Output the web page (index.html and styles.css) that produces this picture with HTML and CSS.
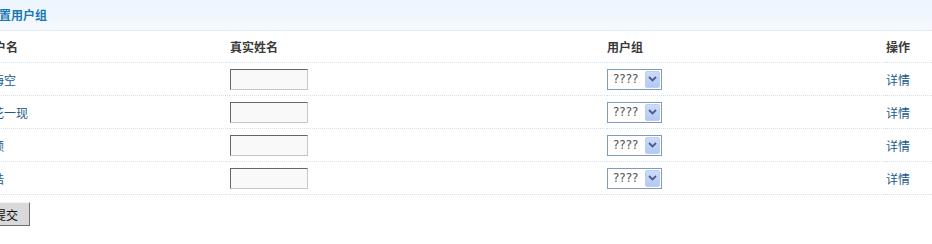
FILE: index.html
```
<!DOCTYPE html>
<html lang="zh-CN">
  <head>
    <meta charset="UTF-8">
    <meta name="viewport" content="width=device-width, initial-scale=1.0">
    <title>设置用户组</title>
    <link rel="stylesheet" href="styles.css">
  </head>
  <body>
    <div id="contingut">
      <div class="titol">设置用户组</div>

      <table class="llista">
        <tr class="cap">
          <th class="c1">用户名</th>
          <th class="c2">真实姓名</th>
          <th class="c3">用户组</th>
          <th class="c4">操作</th>
        </tr>
        <tr>
          <td><a href="#">碧海空</a></td>
          <td><input class="nom" type="text"></td>
          <td>
            <div class="grup"><span class="valor">????</span><span class="fletxa"><svg width="9" height="6" viewBox="0 0 9 6"><path d="M1 1 L4.5 4.5 L8 1" fill="none" stroke="#4a5f88" stroke-width="1.8"/></svg></span></div>
          </td>
          <td><a href="#">详情</a></td>
        </tr>
        <tr>
          <td><a href="#">昙花一现</a></td>
          <td><input class="nom" type="text"></td>
          <td>
            <div class="grup"><span class="valor">????</span><span class="fletxa"><svg width="9" height="6" viewBox="0 0 9 6"><path d="M1 1 L4.5 4.5 L8 1" fill="none" stroke="#4a5f88" stroke-width="1.8"/></svg></span></div>
          </td>
          <td><a href="#">详情</a></td>
        </tr>
        <tr>
          <td><a href="#">红颜</a></td>
          <td><input class="nom" type="text"></td>
          <td>
            <div class="grup"><span class="valor">????</span><span class="fletxa"><svg width="9" height="6" viewBox="0 0 9 6"><path d="M1 1 L4.5 4.5 L8 1" fill="none" stroke="#4a5f88" stroke-width="1.8"/></svg></span></div>
          </td>
          <td><a href="#">详情</a></td>
        </tr>
        <tr>
          <td><a href="#">明皓</a></td>
          <td><input class="nom" type="text"></td>
          <td>
            <div class="grup"><span class="valor">????</span><span class="fletxa"><svg width="9" height="6" viewBox="0 0 9 6"><path d="M1 1 L4.5 4.5 L8 1" fill="none" stroke="#4a5f88" stroke-width="1.8"/></svg></span></div>
          </td>
          <td><a href="#">详情</a></td>
        </tr>
      </table>

      <button class="envia" type="button">提交</button>
    </div>
  </body>
</html>
```

FILE: styles.css
```
body {
  margin: 0;
  background: white;
  font-family: "Noto Sans CJK SC", "DejaVu Sans", sans-serif;
  font-size: 12px;
  color: #333;
  overflow: hidden;
}

/* la pagina comenca una mica fora de la finestra */
#contingut {
  width: 960px;
  margin-left: -20px;
}

.titol {
  height: 30px;
  line-height: 30px;
  padding-left: 7px;
  background: linear-gradient(#ecf4fd, #f5f9fe);
  border-bottom: 1px dotted #d5e3ef;
  color: #1a78b4;
  font-weight: bold;
}

/* --------------- Taula ----------------- */

.llista {
  width: 960px;
  border-collapse: collapse;
  table-layout: fixed;
}

.llista th, .llista td {
  padding: 0;
  text-align: left;
  border-bottom: 1px dotted #d3e2ec;
}

.llista th {
  height: 31px;
  font-weight: bold;
  color: #3a3a3a;
}

.llista td {
  height: 32px;
}

/* la primera columna porta 2px de padding: 248 + 2 = 250 */
.llista .c1 { width: 248px; padding-left: 2px; }
.llista .c2 { width: 377px; }
.llista .c3 { width: 279px; }

.llista a {
  color: #205a8a;
  text-decoration: none;
}

.nom {
  display: block;
  box-sizing: border-box;
  width: 78px;
  height: 21px;
  margin: 0;
  background: #f9f9f9;
  border: 1px solid #c6c6c6;
  border-top-color: #666;
  border-left-color: #666;
}

/* --------------- Desplegable ----------------- */

.grup {
  box-sizing: border-box;
  width: 55px;
  height: 21px;
  border: 1px solid #7f9db9;
  display: flex;
  align-items: center;
  justify-content: space-between;
  padding: 0 1px 0 5px;
  background: white;
}

.valor {
  font-family: "DejaVu Sans", sans-serif;
  font-size: 12px;
  color: #555;
}

.fletxa {
  box-sizing: border-box;
  width: 15px;
  height: 17px;
  display: flex;
  align-items: center;
  justify-content: center;
  background: linear-gradient(#cddbfb, #b3c8f4);
  border: 1px solid #bccff5;
  border-radius: 2px;
}

/* --------------- Boto ----------------- */

.envia {
  margin: 7px 0 0 0;
  height: 24px;
  padding: 0 11px 0 13px;
  font-family: "Noto Sans CJK SC", sans-serif;
  font-size: 12px;
  color: #111;
  background: #d9d9d9;
  border: 1px solid;
  border-color: #f4f4f4 #707070 #707070 #f4f4f4;
}
```
